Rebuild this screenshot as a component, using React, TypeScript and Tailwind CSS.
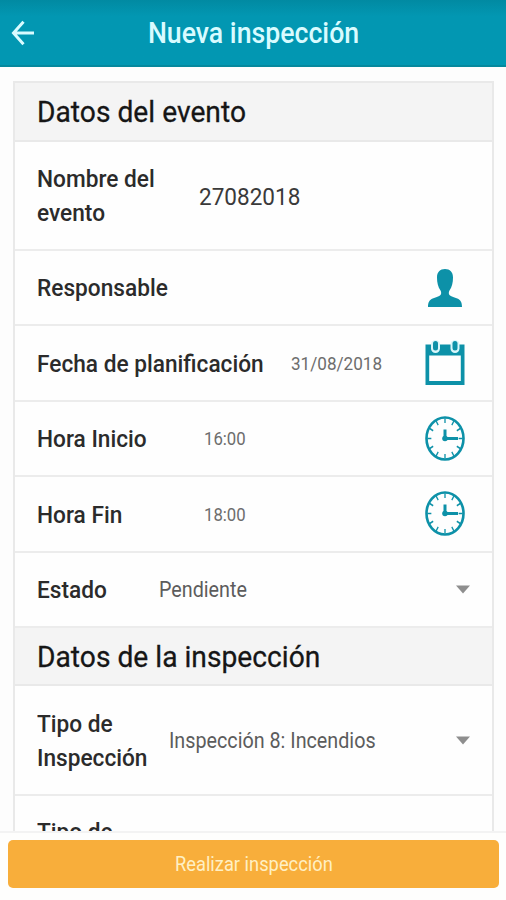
import type { ReactNode } from "react";

const TEAL = "#0d91a8";

interface RowProps {
  label: ReactNode;
  children?: ReactNode;
  tall?: boolean;
}

function SectionTitle({ children }: { children: ReactNode }) {
  return (
    <div className="h-[58.5px] shrink-0 flex items-center pt-[2px] pl-[22px] bg-[#f4f4f4] border-b-2 border-[#e9e9e9]">
      <h2 className="origin-left scale-x-[.928] text-[30.4px] text-[#161616] whitespace-nowrap [-webkit-text-stroke:0.3px_#161616]">
        {children}
      </h2>
    </div>
  );
}

function Label({ children }: { children: ReactNode }) {
  return (
    <span className="origin-left scale-x-[.925] text-[24.5px] leading-[34.5px] font-medium text-[#2b2b2b] whitespace-nowrap">
      {children}
    </span>
  );
}

function Row({ label, children, tall }: RowProps) {
  return (
    <div
      className={`${tall ? "h-[109.5px]" : "h-[75.4px]"} shrink-0 grid grid-cols-1 items-center pl-[22px] border-b-2 border-[#ececec]`}
    >
      <div className="col-start-1 row-start-1 flex pt-[2px]">
        <Label>{label}</Label>
      </div>
      <div className="col-start-1 row-start-1 flex items-center">{children}</div>
    </div>
  );
}

function BackArrow() {
  return (
    <svg width="24" height="26" viewBox="0 0 24 26" fill="none" stroke="#d9fbff" strokeWidth="3">
      <path d="M12.5 1.8 2.5 13l10 11.2M2.5 13H23" />
    </svg>
  );
}

function PersonIcon() {
  return (
    <svg width="36" height="38" viewBox="0 0 36 38" fill={TEAL}>
      <path d="M18 0c5 0 8 3 8 8.5 0 5-1 9.5-3.5 13-1 1.5-1 4 .5 5 1.5 1 4.5 1.9 7.3 3.1 3.2 1.4 4.7 3.6 4.7 8.4H1c0-4.8 1.5-7 4.7-8.4 2.8-1.2 5.8-2.1 7.3-3.1 1.5-1 1.5-3.5.5-5C11 18 10 13.5 10 8.5 10 3 13 0 18 0Z" />
    </svg>
  );
}

function CalendarIcon() {
  return (
    <svg width="40" height="46" viewBox="0 0 40 46">
      <path d="M.5 4.5H39.5V45H.5ZM4.2 15.5V41H35.8V15.5Z" fill={TEAL} fillRule="evenodd" />
      <rect x="6" y="0" width="9" height="13" rx="4.5" fill="#d9f6fa" />
      <rect x="25.5" y="0" width="9" height="13" rx="4.5" fill="#d9f6fa" />
      <rect x="8" y="1" width="5" height="9.5" rx="2.5" fill={TEAL} />
      <rect x="27.5" y="1" width="5" height="9.5" rx="2.5" fill={TEAL} />
    </svg>
  );
}

function ClockIcon() {
  const ticks = [0, 30, 60, 90, 120, 150, 180, 210, 240, 270, 300, 330];
  return (
    <svg width="40" height="45" viewBox="0 0 40 45" fill="none" stroke={TEAL}>
      <ellipse cx="20" cy="22.5" rx="18.5" ry="21" strokeWidth="2.6" />
      <g transform="translate(20 22.5) scale(.88 1)">
        {ticks.map((deg) => (
          <path key={deg} d="M0-20V-15.5" strokeWidth="1.5" transform={`rotate(${deg})`} />
        ))}
      </g>
      <path d="M20 13.5V22.5" strokeWidth="3" />
      <path d="M20 22.5H33" strokeWidth="3" />
      <circle cx="20" cy="22.5" r="2.8" fill={TEAL} stroke="none" />
    </svg>
  );
}

function Caret() {
  return (
    <svg className="ml-auto mr-[22px]" width="14" height="9" viewBox="0 0 14 9">
      <path d="M0 .5H14L7 8.5Z" fill="#8e8e8e" />
    </svg>
  );
}

export default function App() {
  return (
    <div className="w-[506px] h-[900px] flex flex-col overflow-hidden bg-[#fdfdfd] font-['Roboto',sans-serif]">
      {/* Header */}
      <header className="h-[67px] shrink-0 grid grid-cols-[60px_1fr_60px] items-center bg-linear-to-b from-[#018aa2] to-[#0297b2] to-25% border-b-2 border-[#05889d]">
        <div className="pl-[11px]">
          <BackArrow />
        </div>
        <h1 className="justify-self-center pl-px pt-[2px] scale-x-[.93] text-[28.7px] font-medium text-[#d9fbff] whitespace-nowrap">
          Nueva inspección
        </h1>
      </header>

      {/* Form */}
      <main className="flex-1 min-h-0 overflow-hidden pt-[14px] pl-[13px] pr-[12px]">
        <div className="h-[900px] flex flex-col bg-[#fefefe] border-2 border-[#e9e9e9]">
          <SectionTitle>Datos del evento</SectionTitle>
          <Row tall label={<>Nombre del<br />evento</>}>
            <span className="ml-[162px] pt-[5px] origin-left scale-x-[.92] text-[24.5px] text-[#3a3a3a]">27082018</span>
          </Row>
          <Row label="Responsable">
            <span className="ml-auto mr-[29px]"><PersonIcon /></span>
          </Row>
          <Row label="Fecha de planificación">
            <span className="ml-[254px] pt-[2px] origin-left scale-x-[.9] text-[19px] text-[#6d6d6d]">31/08/2018</span>
            <span className="ml-auto mr-[27px]"><CalendarIcon /></span>
          </Row>
          <Row label="Hora Inicio">
            <span className="ml-[167px] pt-[2px] origin-left scale-x-[.88] text-[19px] text-[#6d6d6d]">16:00</span>
            <span className="ml-auto mr-[27px]"><ClockIcon /></span>
          </Row>
          <Row label="Hora Fin">
            <span className="ml-[167px] pt-[2px] origin-left scale-x-[.88] text-[19px] text-[#6d6d6d]">18:00</span>
            <span className="ml-auto mr-[27px]"><ClockIcon /></span>
          </Row>
          <Row label="Estado">
            <span className="ml-[122px] pt-[2px] origin-left scale-x-[.91] text-[21.7px] text-[#5c5c5c]">Pendiente</span>
            <Caret />
          </Row>
          <SectionTitle>Datos de la inspección</SectionTitle>
          <Row tall label={<>Tipo de<br />Inspección</>}>
            <span className="ml-[132px] pt-[2px] origin-left scale-x-[.91] text-[21.7px] text-[#5c5c5c] whitespace-nowrap">
              Inspección 8: Incendios
            </span>
            <Caret />
          </Row>
          <div className="pt-[19px] pl-[22px] flex">
            <Label>Tipo de</Label>
          </div>
        </div>
      </main>

      {/* Footer */}
      <footer className="h-[69px] shrink-0 pt-[7px] pl-[8px] pr-[7px] border-t-2 border-[#f3f3f3] bg-[#fefefd]">
        <button className="w-full h-[48px] pt-[2px] flex items-center justify-center rounded-[5px] bg-[#f8ae3b]">
          <span className="scale-x-[.93] text-[19.7px] text-[#fff0c4] whitespace-nowrap">Realizar inspección</span>
        </button>
      </footer>
    </div>
  );
}
